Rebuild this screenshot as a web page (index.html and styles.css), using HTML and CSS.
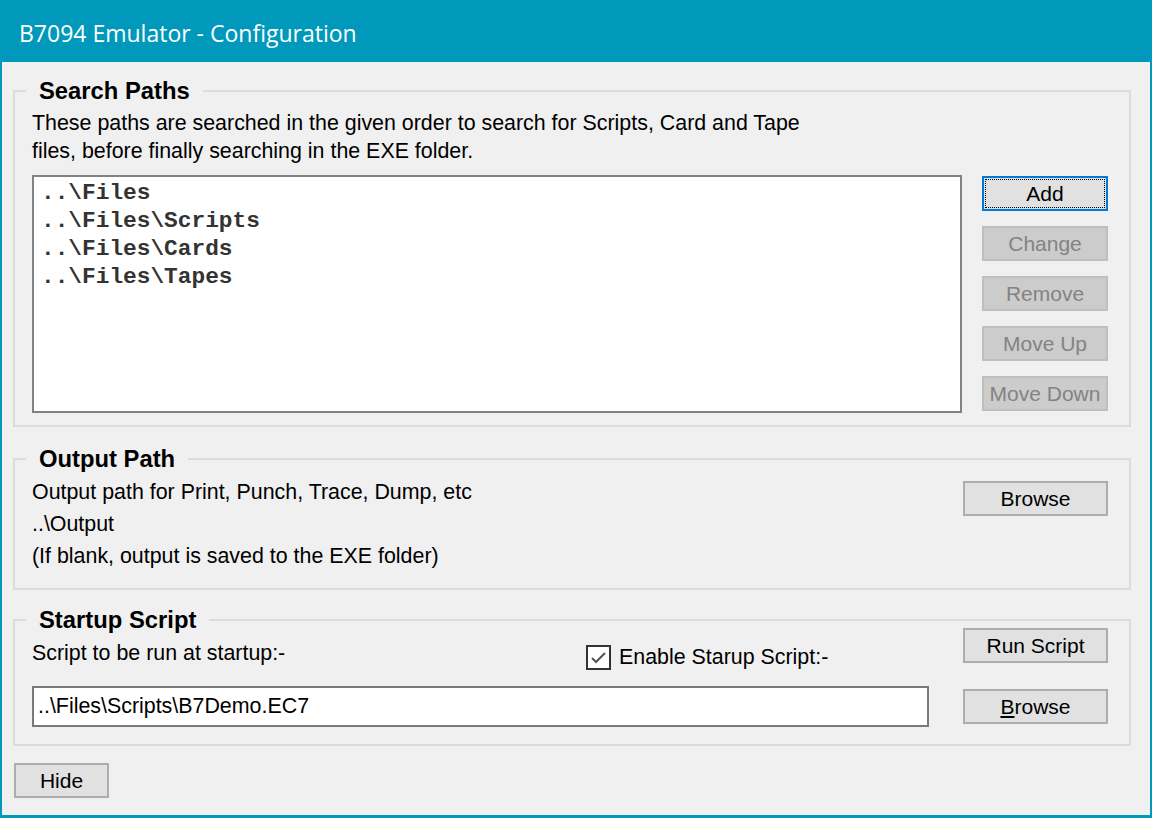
FILE: index.html
```html
<!DOCTYPE html>
<html>
<head>
<meta charset="utf-8">
<title>B7094 Emulator - Configuration</title>
<link rel="stylesheet" href="styles.css">
</head>
<body>
<div class="window">
  <div class="titlebar">B7094 Emulator - Configuration</div>
  <div class="client">
    <fieldset class="group group-search">
      <legend>Search Paths</legend>
      <div class="group-body">
        <p class="desc">These paths are searched in the given order to search for Scripts, Card and Tape<br>files, before finally searching in the EXE folder.</p>
        <div class="search-row">
          <ul class="listbox">
            <li>..\Files</li>
            <li>..\Files\Scripts</li>
            <li>..\Files\Cards</li>
            <li>..\Files\Tapes</li>
          </ul>
          <div class="btn-col">
            <button class="btn btn-wide btn-focus">Add</button>
            <button class="btn btn-wide" disabled>Change</button>
            <button class="btn btn-wide" disabled>Remove</button>
            <button class="btn btn-wide" disabled>Move Up</button>
            <button class="btn btn-wide" disabled>Move Down</button>
          </div>
        </div>
      </div>
    </fieldset>

    <fieldset class="group group-output">
      <legend>Output Path</legend>
      <div class="group-body out-grid">
        <div class="out-lines">
          <div class="line">Output path for Print, Punch, Trace, Dump, etc</div>
          <div class="line">..\Output</div>
          <div class="line">(If blank, output is saved to the EXE folder)</div>
        </div>
        <button class="btn btn-side btn-out">Browse</button>
      </div>
    </fieldset>

    <fieldset class="group group-startup">
      <legend>Startup Script</legend>
      <div class="group-body start-grid">
        <div class="start-row1">
          <div class="start-label">Script to be run at startup:-</div>
          <label class="chk">
            <span class="chk-box">
              <svg width="21" height="21" viewBox="0 0 21 21"><polyline points="4,11 8,15 17,6" fill="none" stroke="#555" stroke-width="2"/></svg>
            </span>
            <span class="chk-text">Enable Starup Script:-</span>
          </label>
        </div>
        <button class="btn btn-side">Run Script</button>
        <input class="textbox" type="text" value="..\Files\Scripts\B7Demo.EC7" readonly>
        <button class="btn btn-side btn-browse2"><u>B</u>rowse</button>
      </div>
    </fieldset>

    <button class="btn btn-hide">Hide</button>
  </div>
</div>
</body>
</html>
```

FILE: styles.css
```css
* { box-sizing: border-box; }
html, body { margin: 0; padding: 0; }
body {
  width: 1152px;
  height: 818px;
  overflow: hidden;
  background: #0099bc;
  font-family: "Liberation Sans", Arial, sans-serif;
  font-size: 21.4px;
  color: #000;
}
.window {
  width: 1152px;
  height: 818px;
  background: #0099bc;
  display: flex;
  flex-direction: column;
  padding: 0 2px 3px 2px;
}
.titlebar {
  height: 62px;
  flex: none;
  display: flex;
  align-items: center;
  padding: 4px 0 0 17px;
  color: #fff;
  font-family: "Open Sans", "Noto Sans", sans-serif;
  font-size: 23px;
}
.client {
  flex: 1;
  background: #f0f0f0;
  padding: 21px 19px 0 11px;
  display: flex;
  flex-direction: column;
  align-items: stretch;
}
.group {
  margin: 0;
  padding: 0;
  border: 2px solid #dcdcdc;
  min-width: 0;
}
.group legend {
  margin-left: 11px;
  padding: 0 13px;
  font-weight: bold;
  font-size: 23.8px;
  line-height: 16px;
}
.group-body {
  padding: 0 21px 0 17px;
}
/* Search paths */
.group-search .group-body { padding-top: 10px; padding-bottom: 12px; }
.desc {
  margin: 0;
  line-height: 28px;
}
.search-row {
  display: flex;
  gap: 20px;
  margin-top: 10px;
}
.listbox {
  flex: 1;
  height: 238px;
  margin: 0;
  padding: 2px 0 0 7px;
  list-style: none;
  background: #fff;
  border: 2px solid #828282;
  font-family: "Liberation Mono", "Courier New", monospace;
  font-weight: bold;
  font-size: 22.8px;
  line-height: 28px;
  color: #333;
}
.btn-col {
  display: flex;
  flex-direction: column;
  gap: 15px;
  padding-top: 1px;
}
.btn {
  height: 35px;
  padding: 0;
  margin: 0;
  background: #e1e1e1;
  border: 2px solid #adadad;
  font-family: "Liberation Sans", Arial, sans-serif;
  font-size: 21px;
  line-height: 1;
  color: #000;
  text-align: center;
}
.btn-wide { width: 126px; }
.btn-side { width: 145px; }
.btn:disabled {
  background: #cccccc;
  border-color: #bfbfbf;
  color: #838383;
}
.btn-focus {
  border-color: #0078d7;
  outline: 1px dotted #000;
  outline-offset: -4px;
}
/* Output path */
.group-output { margin-top: 24px; }
.out-grid {
  display: grid;
  grid-template-columns: 1fr 145px;
  column-gap: 34px;
  padding-top: 9px;
  padding-bottom: 16px;
}
.line { line-height: 32px; }
.btn-out { margin-top: 5px; align-self: start; }
/* Startup */
.group-startup { margin-top: 22px; }
.start-grid {
  display: grid;
  grid-template-columns: 1fr 145px;
  column-gap: 34px;
  row-gap: 15px;
  padding-bottom: 17px;
}
.start-row1 {
  display: grid;
  grid-template-columns: 554px auto;
  align-items: start;
}
.start-label {
  line-height: 28px;
  margin-top: 11px;
}
.chk {
  display: flex;
  align-items: center;
  gap: 8px;
  margin-top: 15px;
}
.chk-box {
  width: 25px;
  height: 25px;
  border: 2px solid #333;
  background: #fff;
  display: flex;
  align-items: center;
  justify-content: center;
}
.chk-box svg { display: block; }
.chk-text { line-height: 28px; }
.textbox {
  height: 41px;
  width: 100%;
  margin: 0;
  padding: 0 4px;
  border: 2px solid #7a7a7a;
  background: #fff;
  font-family: "Liberation Sans", Arial, sans-serif;
  font-size: 21.4px;
  color: #000;
  outline: none;
}
.btn-browse2 { margin-top: 3px; align-self: start; }
.btn-hide {
  width: 95px;
  margin-top: 17px;
  margin-left: 1px;
  align-self: flex-start;
}
```
